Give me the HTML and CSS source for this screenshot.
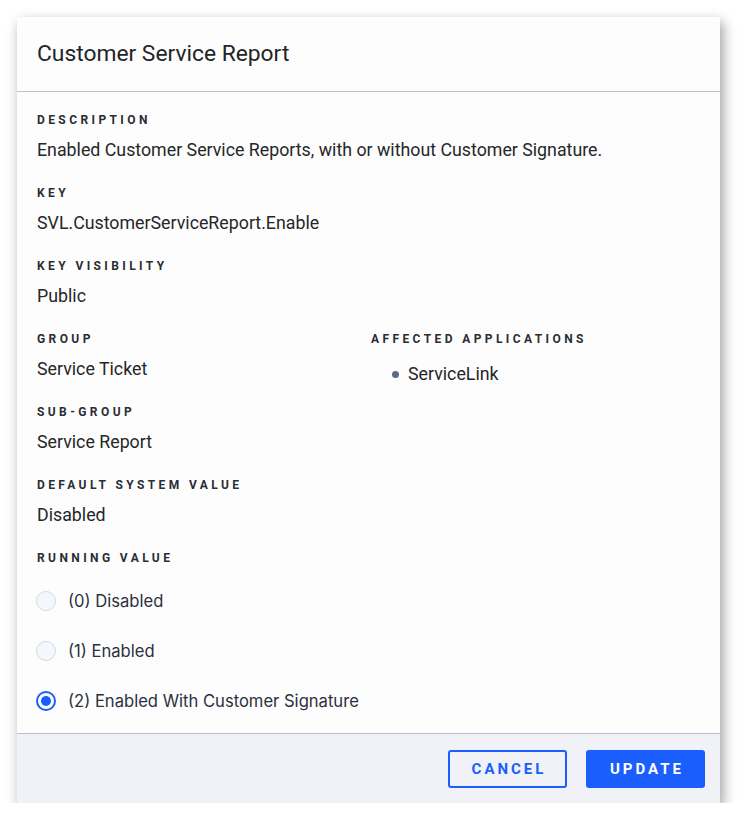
FILE: index.html
```html
<!DOCTYPE html>
<html lang="en">
<head>
<meta charset="utf-8">
<title>Customer Service Report</title>
<link rel="stylesheet" href="styles.css">
</head>
<body>
<div class="dialog">
  <div class="dialog-header">
    <h1 class="dialog-title">Customer Service Report</h1>
  </div>
  <div class="dialog-body">
    <div class="field">
      <div class="label">Description</div>
      <div class="value">Enabled Customer Service Reports, with or without Customer Signature.</div>
    </div>
    <div class="field">
      <div class="label">Key</div>
      <div class="value">SVL.CustomerServiceReport.Enable</div>
    </div>
    <div class="field">
      <div class="label">Key Visibility</div>
      <div class="value">Public</div>
    </div>
    <div class="columns">
      <div class="col">
        <div class="field">
          <div class="label">Group</div>
          <div class="value">Service Ticket</div>
        </div>
        <div class="field">
          <div class="label">Sub-Group</div>
          <div class="value">Service Report</div>
        </div>
      </div>
      <div class="col">
        <div class="field">
          <div class="label">Affected Applications</div>
          <ul class="app-list">
            <li>ServiceLink</li>
          </ul>
        </div>
      </div>
    </div>
    <div class="field">
      <div class="label">Default System Value</div>
      <div class="value">Disabled</div>
    </div>
    <div class="field field-last">
      <div class="label">Running Value</div>
      <div class="radio-group">
        <label class="radio"><span class="radio-dot"></span><span class="radio-text">(0) Disabled</span></label>
        <label class="radio"><span class="radio-dot"></span><span class="radio-text">(1) Enabled</span></label>
        <label class="radio"><span class="radio-dot checked"></span><span class="radio-text">(2) Enabled With Customer Signature</span></label>
      </div>
    </div>
  </div>
  <div class="dialog-footer">
    <button class="btn btn-outline">Cancel</button>
    <button class="btn btn-primary">Update</button>
  </div>
</div>
</body>
</html>
```

FILE: styles.css
```css
* { box-sizing: border-box; }

html, body {
  margin: 0;
  padding: 0;
  background: #ffffff;
}

body {
  padding: 17px 0 0 17px;
  font-family: Roboto, "Liberation Sans", sans-serif;
}

.dialog {
  width: 703px;
  background: #fdfdfd;
  box-shadow: 3px 5px 12px rgba(0, 0, 0, 0.38);
}

.dialog-header {
  padding: 23px 20px 23px;
  border-bottom: 1px solid #b9c0ca;
}

.dialog-title {
  margin: 0;
  font-size: 22.8px;
  line-height: 28px;
  font-weight: 400;
  color: #222428;
}

.dialog-body {
  padding: 20px 20px 7px;
}

.field {
  margin-bottom: 23px;
}

.field-last {
  margin-bottom: 0;
}

.label {
  font-size: 12px;
  line-height: 16px;
  font-weight: 700;
  letter-spacing: 3.4px;
  text-transform: uppercase;
  color: #2a2d34;
  margin-bottom: 10px;
}

.value {
  font-size: 17.8px;
  line-height: 24px;
  color: #262728;
}

.columns {
  display: grid;
  grid-template-columns: 334px 1fr;
}

.app-list {
  list-style: none;
  margin: 0;
  padding: 5px 0 0 21px;
}

.app-list li {
  display: flex;
  align-items: center;
  gap: 9px;
  font-size: 17.8px;
  line-height: 24px;
  color: #262728;
}

.app-list li::before {
  content: "";
  width: 7px;
  height: 7px;
  border-radius: 50%;
  background: #5b6b86;
}

.radio-group {
  display: flex;
  flex-direction: column;
  margin-top: 9px;
}

.radio {
  display: flex;
  align-items: center;
  height: 50px;
  gap: 12px;
}

.radio-dot {
  width: 20px;
  height: 20px;
  margin-left: -1px;
  border-radius: 50%;
  background: #f4f7fc;
  border: 1px solid #d3dae5;
  display: flex;
  align-items: center;
  justify-content: center;
}

.radio-dot.checked {
  background: #ffffff;
  border: 2px solid #1a5ffe;
}

.radio-dot.checked::after {
  content: "";
  width: 10px;
  height: 10px;
  border-radius: 50%;
  background: #1a5ffe;
}

.radio-text {
  font-family: Inter, "Noto Sans", sans-serif;
  font-size: 16.6px;
  line-height: 24px;
  color: #2c3140;
}

.dialog-footer {
  display: flex;
  justify-content: flex-end;
  gap: 19px;
  padding: 16px 15px 15px;
  background: #f0f2f7;
  border-top: 1px solid #b9c0ca;
}

.btn {
  height: 38px;
  width: 119px;
  border-radius: 3px;
  font-family: Roboto, "Liberation Sans", sans-serif;
  font-size: 15px;
  font-weight: 700;
  letter-spacing: 3px;
  text-transform: uppercase;
  cursor: pointer;
  padding: 0 0 0 3px;
}

.btn-outline {
  background: transparent;
  border: 2px solid #1a5ffe;
  color: #1a5ffe;
}

.btn-primary {
  background: #1a5ffe;
  border: 2px solid #1a5ffe;
  color: #ffffff;
}
```
